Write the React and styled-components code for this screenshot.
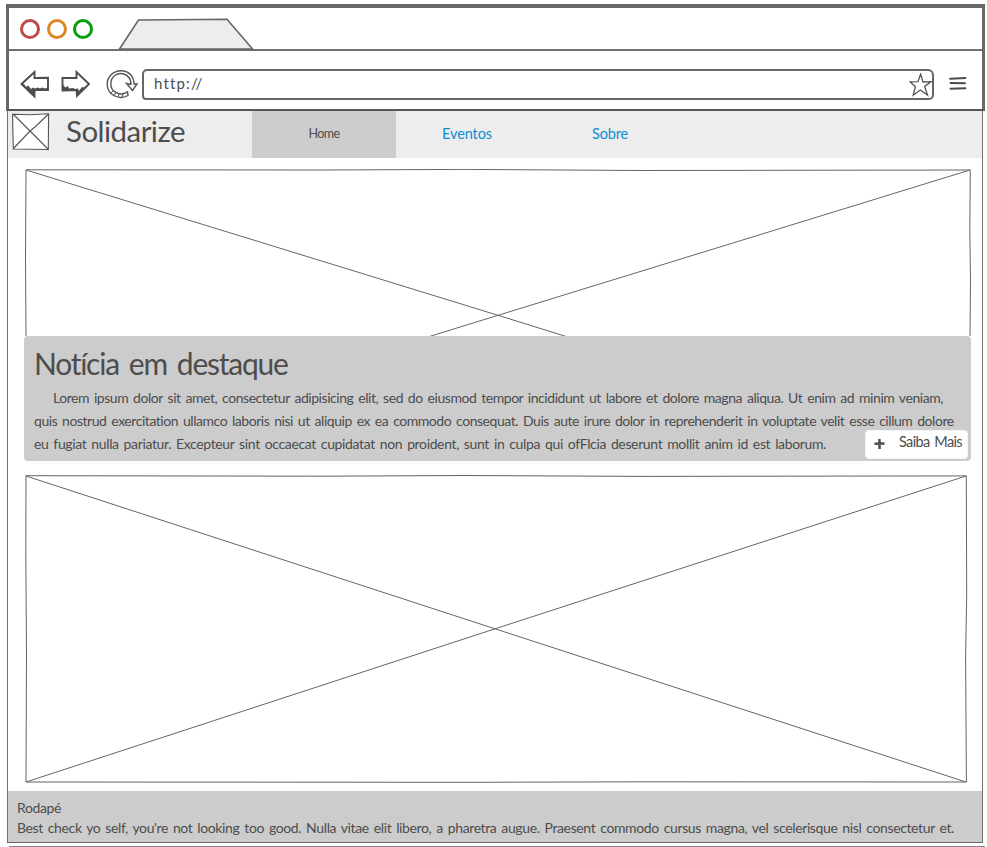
import React, { useLayoutEffect, useRef, useState } from "react";
import styled, { createGlobalStyle } from "styled-components";

const GlobalStyle = createGlobalStyle`
  * { box-sizing: border-box; }
  body {
    margin: 0;
    background: #fff;
    color: #4d4d4d;
    font-family: Lato, "Open Sans", sans-serif;
    overflow: hidden;
  }
  svg { display: block; flex: none; }
`;

const Page = styled.div`
  width: 987px;
  height: 847px;
  padding: 4px 2px 0 6px;
  overflow: hidden;
`;

const BrowserHeader = styled.header`
  width: 979px;
  height: 107px;
  border: 4px solid #686868;
  border-left-width: 3px;
  border-right-width: 3px;
  border-bottom: 2px solid #555;
`;

const TabStrip = styled.div`
  display: flex;
  height: 43px;
  padding: 10px 0 0 11px;
  border-bottom: 2px solid #707070;
`;

const Lights = styled.div`
  display: flex;
  gap: 6.7px;
  padding-top: 0.5px;
  margin-right: 25px;
`;

const Light = styled.span`
  width: 20px;
  height: 20px;
  border: 3px solid ${(p) => p.$color};
  border-radius: 50%;
`;

const Toolbar = styled.div`
  display: flex;
  height: 58px;
  padding: 19px 0 0 11px;
`;

const ArrowPair = styled.div`
  display: flex;
  gap: 11px;
  margin-right: 15px;
`;

const AddressBar = styled.div`
  display: flex;
  justify-content: space-between;
  width: 792px;
  height: 31px;
  margin: -1px 15px 0 3px;
  padding: 2px 0 0 10px;
  border: 2px solid #666;
  border-radius: 5px 6px 5px 4px;
`;

const Viewport = styled.main`
  width: 976px;
  height: 732px;
  margin-left: 1px;
  border: 1px solid #707070;
  border-top: 0;
  border-bottom: 2px solid #666;
`;

const Nav = styled.nav`
  display: flex;
  height: 47px;
  background: #ededed;
  padding-left: 4px;
`;

const Brand = styled.div`
  width: 186px;
  padding-top: 1px;
`;

const Logo = styled.div`
  width: 54px;
  padding-top: 2px;
`;

const NavItem = styled.a`
  display: flex;
  justify-content: center;
  width: ${(p) => p.$width}px;
  padding-top: 12px;
  background: ${(p) => (p.$active ? "#ccc" : "transparent")};
  color: ${(p) => (p.$active ? "#4d4d4d" : "#0b8fd2")};
`;

const Content = styled.section`
  padding: 11px 0 0 16px;
`;

const Feature = styled.article`
  position: relative;
  width: 947px;
  height: 125px;
  padding: 9px 10px 0;
  border-radius: 4px;
  background: #ccc;
  margin-bottom: 14px;
`;

const Paragraph = styled.div`
  display: flex;
  flex-direction: column;
  padding-top: 5px;
`;

const MoreButton = styled.button`
  position: absolute;
  right: 3px;
  bottom: 2px;
  display: flex;
  gap: 14px;
  width: 103px;
  height: 29px;
  padding: 0 0 0 8px;
  border: 1px solid #f4f4f4;
  border-radius: 4px;
  background: #fff;
  color: #4d4d4d;
  font-family: inherit;
`;

const Footer = styled.footer`
  height: 51px;
  margin-top: 8px;
  padding: 7px 10px 0 9px;
  background: #ccc;
`;

const BottomEdge = styled.div`
  width: 976px;
  height: 2px;
  margin: 3px 0 0 3px;
  background: #858585;
`;

const Line = styled.div`
  width: ${(p) => p.$width}px;
  margin-left: ${(p) => p.$indent || 0}px;
  font-size: ${(p) => p.$size}px;
  line-height: ${(p) => p.$leading}px;
  word-spacing: 0.12em;
  white-space: nowrap;
`;

/* One line of copy whose tracking is adjusted to fill its measure. */
function FitLine({ width, size = 14, leading = 23, indent, children }) {
  const text = useRef(null);
  const [spacing, setSpacing] = useState(0);
  useLayoutEffect(() => {
    const natural = text.current.getBoundingClientRect().width;
    setSpacing((width - natural) / children.length);
  }, [width, size, children]);
  return (
    <Line $width={width} $size={size} $leading={leading} $indent={indent}>
      <span ref={text} style={{ letterSpacing: `${spacing}px` }}>{children}</span>
    </Line>
  );
}

const BrowserTab = () => (
  <svg width="136" height="32" viewBox="0 0 136 32" fill="#ededed" stroke="#666" strokeWidth="1.6">
    <path d="M1.5 31 L20.5 2 L109 1.2 L134.5 31Z" />
  </svg>
);

const Back = () => (
  <svg width="30" height="29" viewBox="0 0 30 29" fill="none" stroke="#4d4d4d" strokeWidth="1.9">
    <path d="M1.5 14 L14.5 2 V8 L28 7.8 L28 20 L14.5 20 V26.5 Z" />
    <path d="M2 14 L14 26 L14.5 20 L28 20 L28 17.5 L25 18.5 L22 17.5 L20 18.5 L18 17.5 L15 18.5 L13 17.5 L11 19 L8 15.5 L6 17 L4 14Z" fill="#4d4d4d" stroke="none" />
  </svg>
);

const Forward = () => (
  <svg width="30" height="29" viewBox="0 0 30 29" fill="none" stroke="#4d4d4d" strokeWidth="1.9">
    <path d="M1.5 8 H15.5 V2 L28 14 L16 26 L15.5 20 L1.5 20.5Z" />
    <path d="M2 20.5 L2 15 L4.5 17.5 L7 16 L8 18.5 L12 18 L14 19 L17 18.5 L18 21 L21 17 L23 17.5 L27.5 14 L16 26 L15.5 20Z" fill="#4d4d4d" stroke="none" />
  </svg>
);

const Reload = () => (
  <svg width="33" height="30" viewBox="0 0 33 30" fill="none" stroke="#555" strokeWidth="1.4">
    <path d="M19.5 22.8 C13 26 4.8 21.5 4.8 14 C4.8 6 12 2 18 4 C23 6 25 10 25 14.5 L20.5 13.5 L26.5 20.5 L31 14 L28 14 C28 6 22 0.7 15 0.8 C7 1 1.2 7 1.2 14 C1.2 25 13 30.5 22 25.5 L21.5 21.8Z" />
    <path d="M5 23 l3-3 M8 26 l2-4 M12 27 l1-3 M16 28 l1-4" strokeWidth="1" />
  </svg>
);

const Star = () => (
  <svg width="23" height="25" viewBox="0 0 23 25" fill="none" stroke="#555" strokeWidth="1.3">
    <path d="M11.6 1 L14 9 L22 8.6 L15.6 13.5 L18.5 22 L11.3 17 L4.2 22.2 L6.4 13.7 L1 8.8 L9 8.6Z" />
  </svg>
);

const Menu = () => (
  <svg width="18" height="30" viewBox="0 0 18 30" fill="none" stroke="#4d4d4d" strokeWidth="1.9" strokeLinecap="round">
    <path d="M1 8.8 L16.5 8 M1.5 13 L16 13.3 M1.5 18.7 L16.5 18.2" />
  </svg>
);

const Plus = () => (
  <svg width="11" height="26" viewBox="0 0 11 26" fill="none" stroke="#4d4d4d" strokeWidth="2.5">
    <path d="M0.5 12.8 L10.5 12.5 M5.4 8 L5.6 18" />
  </svg>
);

const LogoSketch = () => (
  <svg width="38" height="38" viewBox="0 0 38 38" fill="#fff" stroke="#555" strokeWidth="1.1">
    <path d="M0.6 1.3 L18 1.8 L36.6 0.8 L36.3 36.5 L1.4 36 L0.8 16Z" />
    <path d="M1 1 L18 18 L36.5 36.5 M36.5 1 L23 14 L18 18 L1 36" fill="none" />
  </svg>
);

const HeroSketch = () => (
  <svg width="948" height="167" viewBox="0 0 948 167" fill="none" stroke="#666" strokeWidth="1">
    <path d="M2 167 L1.5 90 L2 0.8 L300 1 L440 0.4 L620 1.5 L946.3 1 L945.8 60 L946.5 110 L946 167" />
    <path d="M2 1 L474 146.3 L940 291 M946 1 L474 146.3 L6 291" />
  </svg>
);

const PictureSketch = () => (
  <svg width="948" height="308" viewBox="0 0 948 308" fill="none" stroke="#666" strokeWidth="1">
    <path d="M2 0.7 L300 1.2 L440 0.5 L620 1.4 L942.3 0.9 L942.7 120 L941.6 180 L942.4 307 L620 306.8 L450 307.3 L2 307 L2.5 180 L1.8 80Z" />
    <path d="M2 1 L471 153.8 L942 307 M942 1 L471 153.8 L2 307" />
  </svg>
);

export default function App() {
  return (
    <>
      <GlobalStyle />
      <Page>
        <BrowserHeader>
          <TabStrip>
            <Lights>
              <Light $color="#be4b4b" />
              <Light $color="#dc8720" />
              <Light $color="#0a9f0a" />
            </Lights>
            <BrowserTab />
          </TabStrip>
          <Toolbar>
            <ArrowPair>
              <Back />
              <Forward />
            </ArrowPair>
            <Reload />
            <AddressBar>
              <FitLine width={49} size={15} leading={21}>http://</FitLine>
              <Star />
            </AddressBar>
            <Menu />
          </Toolbar>
        </BrowserHeader>
        <Viewport>
          <Nav>
            <Logo><LogoSketch /></Logo>
            <Brand>
              <FitLine width={119} size={29.5} leading={38}>Solidarize</FitLine>
            </Brand>
            <NavItem $width={144} $active>
              <FitLine width={31} size={12.5} leading={21}>Home</FitLine>
            </NavItem>
            <NavItem $width={142}>
              <FitLine width={50} size={14.5} leading={21}>Eventos</FitLine>
            </NavItem>
            <NavItem $width={144}>
              <FitLine width={36} size={14.5} leading={21}>Sobre</FitLine>
            </NavItem>
          </Nav>
          <Content>
            <HeroSketch />
            <Feature>
              <FitLine width={254} size={30} leading={36}>Notícia em destaque</FitLine>
              <Paragraph>
                <FitLine width={890} indent={19}>Lorem ipsum dolor sit amet, consectetur adipisicing elit, sed do eiusmod tempor incididunt ut labore et dolore magna aliqua. Ut enim ad minim veniam,</FitLine>
                <FitLine width={920}>quis nostrud exercitation ullamco laboris nisi ut aliquip ex ea commodo consequat. Duis aute irure dolor in reprehenderit in voluptate velit esse cillum dolore</FitLine>
                <FitLine width={792}>eu fugiat nulla pariatur. Excepteur sint occaecat cupidatat non proident, sunt in culpa qui ofFlcia deserunt mollit anim id est laborum.</FitLine>
              </Paragraph>
              <MoreButton>
                <Plus />
                <FitLine width={63} size={14.5} leading={21}>Saiba Mais</FitLine>
              </MoreButton>
            </Feature>
            <PictureSketch />
          </Content>
          <Footer>
            <FitLine width={44} leading={20}>Rodapé</FitLine>
            <FitLine width={937} leading={19}>Best check yo self, you're not looking too good. Nulla vitae elit libero, a pharetra augue. Praesent commodo cursus magna, vel scelerisque nisl consectetur et.</FitLine>
          </Footer>
        </Viewport>
        <BottomEdge />
      </Page>
    </>
  );
}
